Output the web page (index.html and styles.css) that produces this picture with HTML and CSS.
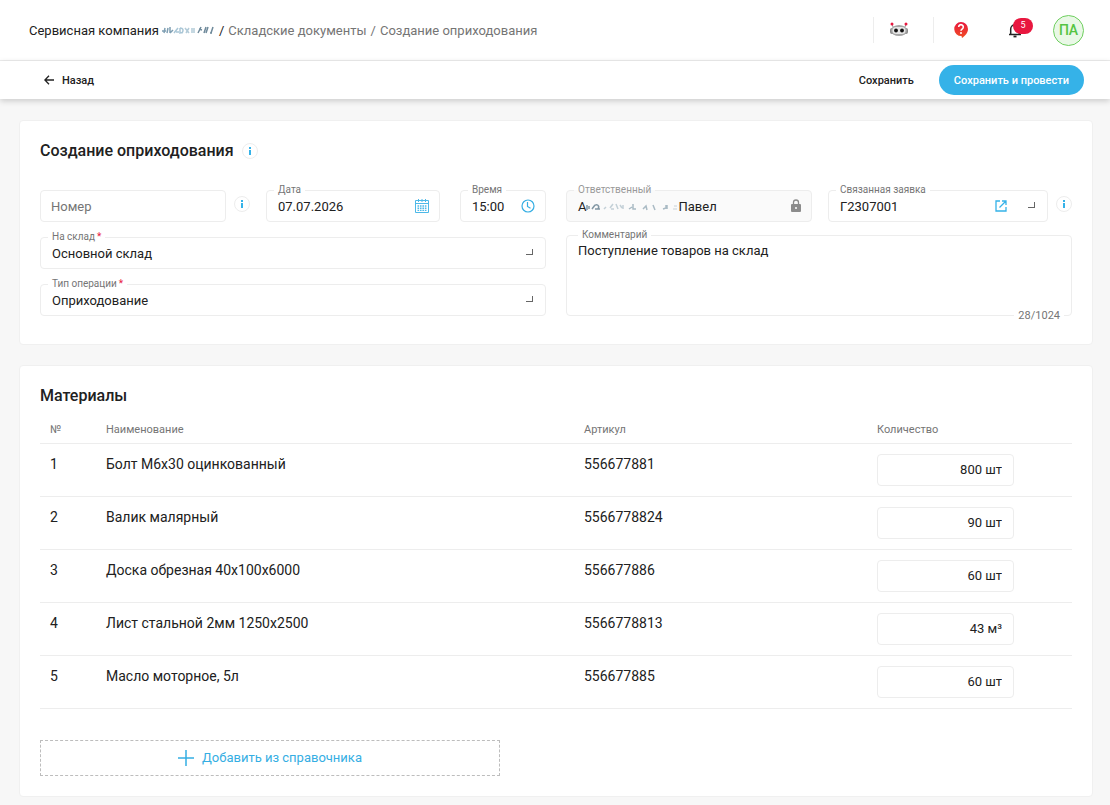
FILE: index.html
```html
<!DOCTYPE html>
<html lang="ru">
<head>
    <meta charset="UTF-8">
    <meta name="viewport" content="width=device-width, initial-scale=1.0">
    <title>Создание оприходования</title>
    <link rel="stylesheet" href="styles.css">
</head>
<body>
    <header class="topbar">
        <nav class="breadcrumbs">
            <a href="#" class="company">Сервисная компания</a>
            <svg class="smudge" width="54" height="10" viewBox="0 0 54 10" aria-hidden="true">
                <g fill="none" stroke="#7f9fb3" stroke-width="1.500">
                    <path d="M1 6h4M4 3l-1 5M7 3l-1 5M9 2v6M12 5l-3 3"/>
                    <path d="M13 8l4-5M15 7h3M19 3v5l3-1M19 3c3 0 4 2 2 5" stroke="#a9c6d6"/>
                    <path d="M24 3l4 5M28 3l-3 5M31 3v5M33 3v5" stroke="#b3cbd8"/>
                    <path d="M37 8l3-6M38 4l3 1M43 8l2-6M45 8l2-6M50 8l2-6M49 8h2" stroke="#6f8a9b"/>
                </g>
            </svg>
            <span class="company">/</span>
            <a href="#">Складские документы</a>
            <span>/</span>
            <a href="#">Создание оприходования</a>
        </nav>
        <div class="topbar-actions">
            <button class="icon-btn divided" aria-label="Бот">
                <svg width="20" height="16" viewBox="0 0 20 16">
                    <path d="M4 5L3 2M16 5l1-3" stroke="#9a9a9a"/>
                    <circle cx="3" cy="2" r="1.500" fill="#e8173f"/>
                    <circle cx="17" cy="2" r="1.500" fill="#e8173f"/>
                    <rect x="1" y="6" width="18" height="6" rx="2" fill="#8b8b8b"/>
                    <ellipse cx="10" cy="8.500" rx="8" ry="5.500" fill="#a5a5a5"/>
                    <rect x="3.500" y="5" width="13" height="7" rx="3.500" fill="#e6e6e6"/>
                    <circle cx="7" cy="8.500" r="1.900" fill="#111"/>
                    <circle cx="13" cy="8.500" r="1.900" fill="#111"/>
                </svg>
            </button>
            <button class="icon-btn divided" aria-label="Помощь">
                <svg width="16" height="18" viewBox="0 0 16 18">
                    <defs>
                        <linearGradient id="help" x1="0" y1="0" x2="0" y2="1">
                            <stop offset="0" stop-color="#e8173f"/>
                            <stop offset="1" stop-color="#f04e23"/>
                        </linearGradient>
                    </defs>
                    <path d="M8 1a7 7 0 0 1 7 7c0 4-3 7-6 9l-.5-2A7 7 0 1 1 8 1z" fill="url(#help)"/>
                    <path d="M5.700 6a2.300 2.300 0 1 1 3.600 1.900C8.400 8.500 8 8.900 8 9.800" fill="none" stroke="#fff" stroke-width="1.600"/>
                    <circle cx="8" cy="12" r="1" fill="#fff"/>
                </svg>
            </button>
            <button class="icon-btn bell" aria-label="Уведомления">
                <svg width="14" height="16" viewBox="0 0 14 16" fill="none" stroke="#222" stroke-width="1.500">
                    <path d="M1 12.500h12M2.700 12.500V7a4.300 4.300 0 0 1 8.600 0v5.500M7 2.700V1"/>
                    <path d="M5.500 14.500h3" stroke-width="1.800"/>
                </svg>
                <span class="badge">5</span>
            </button>
            <button class="avatar">ПА</button>
        </div>
    </header>

    <div class="toolbar">
        <button class="btn back">
            <svg width="10" height="10" viewBox="0 0 10 10" fill="none" stroke="#222" stroke-width="1.300">
                <path d="M10 5H1M5 .8L.9 5 5 9.200"/>
            </svg>
            Назад
        </button>
        <div class="toolbar-right">
            <button class="btn">Сохранить</button>
            <button class="btn btn-primary">Сохранить и провести</button>
        </div>
    </div>

    <main>
        <section class="card">
            <div class="card-title">
                <h1>Создание оприходования</h1>
                <button class="info" aria-label="Справка"><svg width="4" height="8" viewBox="0 0 4 8" fill="#35b2e8"><path d="M1 0h2v2H1zM1 3h2v5H1z"/></svg></button>
            </div>

            <form class="form">
                <div class="form-col left">
                    <div class="row">
                        <div class="field number">
                            <input type="text" id="number" placeholder="Номер" aria-label="Номер">
                        </div>
                        <button type="button" class="info" aria-label="Справка о номере"><svg width="4" height="8" viewBox="0 0 4 8" fill="#35b2e8"><path d="M1 0h2v2H1zM1 3h2v5H1z"/></svg></button>
                        <div class="field date">
                            <label for="date">Дата</label>
                            <input type="text" id="date" value="07.07.2026">
                            <svg width="14" height="14" viewBox="0 0 14 14" fill="none" stroke="#4db9e8">
                                <path d="M.5 1.500h13v12H.5zM.5 4.500h13M3.500 0v3M7 0v3M10.500 0v3"/>
                                <path d="M2.500 7h9M2.500 9.200h9M2.500 11.400h9" stroke-width="1.400" stroke-dasharray="1.600 .85"/>
                            </svg>
                        </div>
                        <div class="field time">
                            <label for="time">Время</label>
                            <input type="text" id="time" value="15:00">
                            <svg width="14" height="14" viewBox="0 0 14 14" fill="none" stroke="#35aee3" stroke-width="1.200">
                                <circle cx="7" cy="7" r="6"/>
                                <path d="M6.500 3v4.500L9.500 9.300"/>
                            </svg>
                        </div>
                    </div>
                    <div class="field">
                        <label for="store">На склад<span class="required">*</span></label>
                        <select id="store"><option>Основной склад</option></select>
                        <i class="corner"></i>
                    </div>
                    <div class="field">
                        <label for="operation">Тип операции<span class="required">*</span></label>
                        <select id="operation"><option>Оприходование</option></select>
                        <i class="corner"></i>
                    </div>
                </div>

                <div class="form-col right">
                    <div class="row">
                        <div class="field person disabled">
                            <label for="person">Ответственный</label>
                            <span class="initial">А</span>
                            <svg class="smudge" width="92" height="10" viewBox="0 0 92 10" aria-hidden="true">
                                <g fill="none" stroke="#a9bac4" stroke-width="1.500">
                                    <path d="M1 4v5M3 5v3M6 8l3-4M8 5c3-3 6 0 4 3M9 8h5" stroke="#8297a4"/>
                                    <path d="M18 8l2-2M24 7l3-4M25 8h3M30 3l2 5M34 4l2 3M37 4v4" stroke="#c3d0d7"/>
                                    <path d="M43 8l3-2M47 3v5h3M57 8l3-3 1 4M67 4l2 5M77 8l3-1v-3M81 8V4"/>
                                    <path d="M88 5h3M87 8h4" stroke="#d9e0e4"/>
                                </g>
                            </svg>
                            <input type="text" id="person" value="Павел" disabled>
                            <svg width="10" height="14" viewBox="0 0 10 14">
                                <rect y="5" width="10" height="8" rx="1" fill="#8c8c8c"/>
                                <path d="M2.500 5V3.500a2.500 2.500 0 0 1 5 0V5" fill="none" stroke="#8c8c8c" stroke-width="1.300"/>
                                <circle cx="5" cy="9" r="1" fill="#fff"/>
                            </svg>
                        </div>
                        <div class="field request">
                            <label for="request">Связанная заявка</label>
                            <select id="request"><option>Г2307001</option></select>
                            <svg class="open" width="12" height="12" viewBox="0 0 12 12" fill="none" stroke="#35b2e8" stroke-width="1.300">
                                <path d="M5 1H1v10h10V7M7 1h4v4M11 1L4.500 7.500"/>
                            </svg>
                            <i class="corner"></i>
                        </div>
                        <button type="button" class="info" aria-label="Справка о заявке"><svg width="4" height="8" viewBox="0 0 4 8" fill="#35b2e8"><path d="M1 0h2v2H1zM1 3h2v5H1z"/></svg></button>
                    </div>
                    <div class="field comment">
                        <label for="comment">Комментарий</label>
                        <textarea id="comment">Поступление товаров на склад</textarea>
                        <span class="counter">28/1024</span>
                    </div>
                </div>
            </form>
        </section>

        <section class="card materials">
            <h2>Материалы</h2>
            <table>
                <thead>
                    <tr>
                        <th class="col-num">№</th>
                        <th>Наименование</th>
                        <th class="col-sku">Артикул</th>
                        <th class="col-qty">Количество</th>
                    </tr>
                </thead>
                <tbody>
                    <tr>
                        <td>1</td>
                        <td>Болт М6х30 оцинкованный</td>
                        <td>556677881</td>
                        <td><input class="qty" type="text" value="800 шт" aria-label="Количество, 1"></td>
                    </tr>
                    <tr>
                        <td>2</td>
                        <td>Валик малярный</td>
                        <td>5566778824</td>
                        <td><input class="qty" type="text" value="90 шт" aria-label="Количество, 2"></td>
                    </tr>
                    <tr>
                        <td>3</td>
                        <td>Доска обрезная 40х100х6000</td>
                        <td>556677886</td>
                        <td><input class="qty" type="text" value="60 шт" aria-label="Количество, 3"></td>
                    </tr>
                    <tr>
                        <td>4</td>
                        <td>Лист стальной 2мм 1250х2500</td>
                        <td>5566778813</td>
                        <td><input class="qty" type="text" value="43 м³" aria-label="Количество, 4"></td>
                    </tr>
                    <tr>
                        <td>5</td>
                        <td>Масло моторное, 5л</td>
                        <td>556677885</td>
                        <td><input class="qty" type="text" value="60 шт" aria-label="Количество, 5"></td>
                    </tr>
                </tbody>
            </table>
            <button class="add-btn">
                <svg width="16" height="16" viewBox="0 0 16 16" stroke="#35aee3" stroke-width="1.500"><path d="M8 0v16M0 8h16"/></svg>
                Добавить из справочника
            </button>
        </section>
    </main>
</body>
</html>
```
FILE: styles.css
```css
* {
    margin: 0;
    padding: 0;
    box-sizing: border-box;
}

:root {
    --primary: #35b2e8;
    --text: #212121;
    --text-light: #757575;
    --background: #f7f7f7;
    --surface: #ffffff;
    --border: #ededed;
    --red: #e8173f;
    --radius: 4px;
}

body {
    font-family: Roboto, sans-serif;
    font-size: 13px;
    color: var(--text);
    background: var(--background);
}

button,
input,
select,
textarea {
    font: inherit;
    color: inherit;
    background: none;
    border: none;
    outline: none;
}

button {
    cursor: pointer;
}

svg {
    display: block;
    flex-shrink: 0;
}

/* Top bar */
.topbar {
    height: 61px;
    padding: 0 26px 0 29px;
    display: flex;
    align-items: center;
    justify-content: space-between;
    background: var(--surface);
    border-bottom: 1px solid var(--border);
}

.breadcrumbs {
    display: flex;
    align-items: center;
    gap: 4px;
    color: var(--text-light);
}

.breadcrumbs a {
    color: inherit;
    text-decoration: none;
}

.breadcrumbs .company {
    color: var(--text);
}

.breadcrumbs .smudge {
    margin-left: -2px;
}

.topbar-actions {
    display: flex;
    align-items: center;
}

.icon-btn {
    width: 60px;
    height: 26px;
    display: flex;
    align-items: center;
    padding-left: 15px;
}

.divided {
    border-left: 1px solid var(--border);
}

.divided + .divided {
    padding-left: 19px;
}

.bell {
    position: relative;
}

.badge {
    position: absolute;
    top: 1px;
    left: 20px;
    width: 20px;
    height: 16px;
    border-radius: 8px;
    background: var(--red);
    color: white;
    font-size: 9px;
    line-height: 15px;
    text-align: center;
}

.avatar {
    width: 31px;
    height: 31px;
    border: 1px solid #6fcf5f;
    border-radius: 50%;
    background: #e9f8e6;
    color: #55c443;
    font-size: 14px;
    font-weight: 500;
}

/* Toolbar */
.toolbar {
    position: relative;
    height: 38px;
    padding: 0 26px 0 44px;
    display: flex;
    align-items: center;
    justify-content: space-between;
    background: var(--surface);
    box-shadow: 0 2px 6px rgba(0, 0, 0, 0.18);
}

.toolbar-right {
    display: flex;
    align-items: center;
    gap: 25px;
}

.btn {
    height: 30px;
    display: flex;
    align-items: center;
    gap: 8px;
    font-size: 11px;
    font-weight: 500;
}

.btn-primary {
    padding: 0 15px;
    border-radius: 15px;
    background: var(--primary);
    color: white;
}

/* Cards */
main {
    padding: 21px 17px 9px 19px;
    display: grid;
    gap: 20px;
}

.card {
    background: var(--surface);
    border: 1px solid #f0f0f0;
    border-radius: var(--radius);
    padding: 20px 20px 28px;
}

.card-title {
    display: flex;
    align-items: center;
    gap: 8px;
    margin-bottom: 29px;
}

h1,
h2 {
    font-size: 16px;
    line-height: 20px;
    font-weight: 500;
}

.info {
    width: 16px;
    height: 16px;
    display: grid;
    place-items: center;
    border: 1px solid var(--border);
    border-radius: 50%;
    flex-shrink: 0;
}

/* Form */
.form {
    display: grid;
    grid-template-columns: 1fr 1fr;
    gap: 20px;
}

.form-col {
    display: flex;
    flex-direction: column;
    gap: 15px;
    min-width: 0;
}

.right {
    gap: 13px;
}

.row {
    display: flex;
}

.row .info {
    margin-top: 6px;
}

.field {
    position: relative;
    height: 32px;
    display: flex;
    align-items: center;
    border: 1px solid var(--border);
    border-radius: var(--radius);
    padding: 0 10px 0 11px;
    min-width: 0;
}

.field label {
    position: absolute;
    top: -8px;
    left: 7px;
    padding: 0 4px;
    background: var(--surface);
    color: var(--text-light);
    font-size: 10px;
    line-height: 14px;
}

.field input,
.field select {
    flex: 1;
    width: 100%;
    min-width: 0;
    height: 30px;
    appearance: none;
}

.field input::placeholder {
    color: var(--text-light);
    opacity: 1;
}

.required {
    color: var(--red);
    margin-left: 2px;
}

.corner {
    width: 7px;
    height: 6px;
    border-right: 1px solid #666;
    border-bottom: 1px solid #666;
    margin: 0 2px 2px 0;
    flex-shrink: 0;
}

.number {
    flex: 1;
    margin-right: 8px;
}

.number {
    padding-left: 10px;
}

.date {
    width: 174px;
    margin: 0 20px 0 16px;
    flex-shrink: 0;
}

.time {
    width: 86px;
    flex-shrink: 0;
}

.person {
    flex: 1;
    margin-right: 16px;
}

.request {
    width: 220px;
    margin-right: 8px;
    flex-shrink: 0;
}

.open {
    margin-right: 21px;
}

.disabled {
    background: #fafafa;
}

.disabled label {
    background: linear-gradient(var(--surface) 50%, #fafafa 50%);
    color: #999;
}

.comment {
    flex: 1;
    height: auto;
}

.comment label {
    left: 11px;
}

.comment textarea {
    flex: 1;
    align-self: stretch;
    padding-top: 6px;
    line-height: 18px;
    resize: none;
}

.counter {
    position: absolute;
    right: 7px;
    bottom: -8px;
    padding: 0 4px;
    background: var(--surface);
    color: var(--text-light);
    font-size: 11px;
    line-height: 14px;
}

/* Materials */
.materials {
    padding-bottom: 20px;
}

table {
    width: 100%;
    margin-top: 10px;
    border-collapse: collapse;
    table-layout: fixed;
}

th,
td {
    text-align: left;
    vertical-align: top;
    border-bottom: 1px solid var(--border);
}

th {
    height: 27px;
    padding-top: 7px;
    color: var(--text-light);
    font-size: 11px;
    font-weight: 400;
}

td {
    height: 53px;
    padding-top: 10px;
    font-size: 14px;
    line-height: 20px;
}

th:first-child,
td:first-child {
    padding-left: 10px;
}

.col-num {
    width: 66px;
}

.col-sku {
    width: 293px;
}

.col-qty {
    width: 195px;
}

.qty {
    display: block;
    width: 137px;
    height: 32px;
    border: 1px solid var(--border);
    border-radius: var(--radius);
    padding: 0 11px;
    font-size: 13px;
    text-align: right;
}

.add-btn {
    width: 460px;
    max-width: 100%;
    height: 36px;
    margin-top: 31px;
    display: flex;
    align-items: center;
    justify-content: center;
    gap: 8px;
    border: 1px dashed #bdbdbd;
    color: #35aee3;
}

@media (max-width: 900px) {
    .form {
        grid-template-columns: 1fr;
    }
}
```
